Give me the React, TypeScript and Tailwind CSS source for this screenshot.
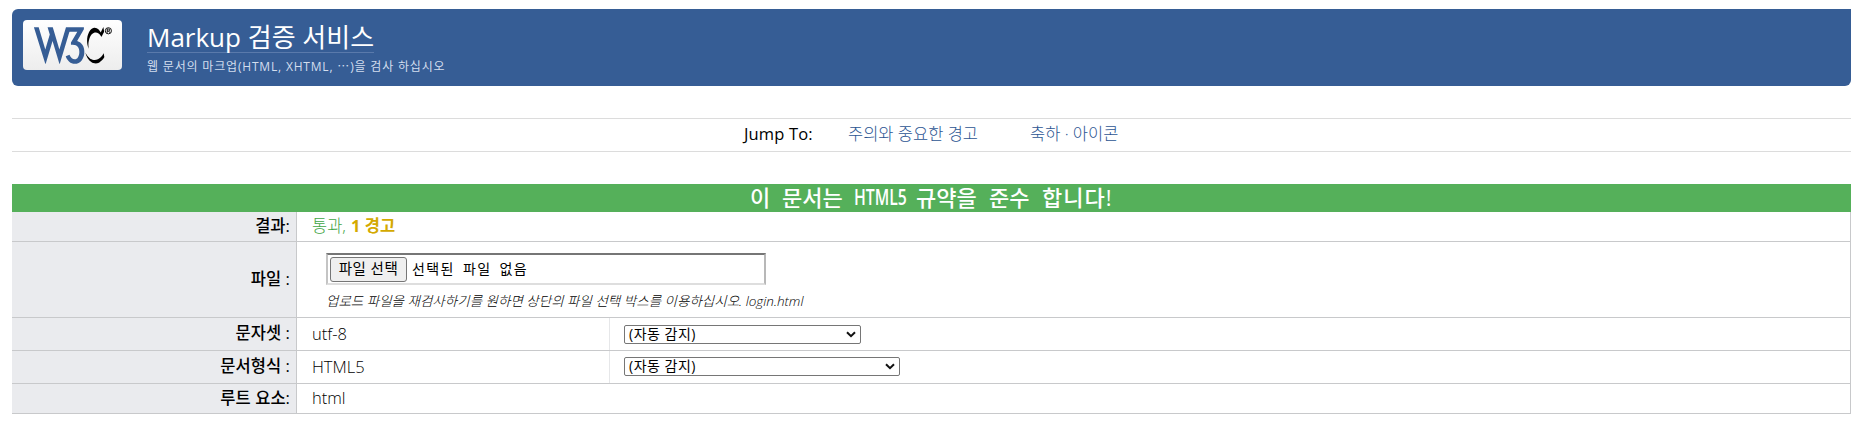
import type { ReactNode } from "react";

function W3CLogo() {
  return (
    <div className="flex h-[50px] w-[99px] shrink-0 items-start rounded bg-gradient-to-b from-white to-[#ededed] pl-[9px] pt-[6px]">
      <svg className="h-[40px] w-[82px]" viewBox="0 0 71.5 35.1" preserveAspectRatio="none" aria-label="W3C">
        <path
          fill="#365d95"
          d="M18.117 1.006l5.759 19.58 5.759-19.58h4.17 11.444v1.946l-5.879 10.128c2.065.663 3.627 1.868 4.686 3.615 1.059 1.748 1.589 3.799 1.589 6.155 0 2.914-.775 5.363-2.324 7.348s-3.555 2.978-6.017 2.978c-1.854 0-3.469-.589-4.845-1.767-1.377-1.178-2.396-2.773-3.058-4.786l3.256-1.35c.477 1.218 1.106 2.178 1.887 2.879.781.702 1.701 1.052 2.76 1.052 1.112 0 2.052-.622 2.82-1.866.768-1.245 1.152-2.74 1.152-4.489 0-1.933-.411-3.429-1.231-4.488-.954-1.244-2.45-1.867-4.489-1.867h-1.588v-1.906l5.56-9.612h-6.712l-.382.65-8.163 27.548h-.397l-5.958-19.937-5.957 19.937h-.397L1.669 1.006h4.17l5.759 19.58 3.892-13.185-1.906-6.395h4.533z"
        />
        <path
          fill="#000"
          transform="translate(-5.9 0)"
          d="M68.139.926l.676 4.105-2.391 4.576s-.918-1.941-2.444-3.016c-1.285-.905-2.122-1.102-3.431-.832-1.681.347-3.587 2.357-4.419 4.835-.995 2.965-1.005 4.4-1.04 5.718-.056 2.113.277 3.362.277 3.362s-1.452-2.686-1.438-6.62c.009-2.808.451-5.354 1.75-7.867 1.143-2.209 2.842-3.535 4.35-3.691 1.559-.161 2.791.59 3.743 1.403 1 .854 2.01 2.721 2.01 2.721L68.139.926zM68.37 23.931s-1.057 1.889-1.715 2.617c-.659.728-1.837 2.01-3.292 2.651s-2.218.762-3.656.624c-1.437-.138-2.772-.97-3.24-1.317-.468-.347-1.664-1.369-2.34-2.322-.676-.953-1.733-2.859-1.733-2.859s.589 1.91.958 2.721c.212.467.864 1.894 1.789 3.136.863 1.159 2.539 3.154 5.086 3.604 2.547.451 4.297-.693 4.73-.97s1.346-1.042 1.924-1.66c.603-.645 1.174-1.468 1.49-1.962.231-.36.607-1.092.607-1.092l-.608-3.171z"
        />
        <ellipse cx="66.6" cy="4.2" rx="2.7" ry="2.7" fill="none" stroke="#000" strokeWidth="0.8" />
        <path d="M65.6 5.9V2.7h1.2c1.4 0 1.4 1.7 0 1.7h-1.2M66.8 4.4l1 1.5" fill="none" stroke="#000" strokeWidth="0.8" />
      </svg>
    </div>
  );
}

function Row({ height, label, children }: { height: string; label: ReactNode; children: ReactNode }) {
  return (
    <div className={`flex border-b border-[#c8c9cb] ${height}`}>
      <div className="flex w-[285px] shrink-0 items-center justify-end border-r border-[#c8c9cb] bg-[#eaebee] pb-px pr-[6px] font-medium tracking-[0.05px] text-black">
        {label}
      </div>
      {children}
    </div>
  );
}

function Select({ width }: { width: string }) {
  return (
    <div className={`flex h-[19px] items-center justify-between rounded-[2px] border border-[#767676] bg-white pl-[4px] pr-[4px] text-[14px] font-normal leading-none tracking-[0.5px] text-black ${width}`}>
      <span className="-mt-px">(자동 감지)</span>
      <svg className="h-[7px] w-[10px]" viewBox="0 0 10 7">
        <path d="M1 1.2l4 4 4-4" fill="none" stroke="#111" strokeWidth="2" />
      </svg>
    </div>
  );
}

export default function App() {
  return (
    <div className="h-[429px] w-[1861px] overflow-hidden bg-white pl-[12px] pr-[10px] pt-[9px] font-['Open_Sans','Noto_Sans_CJK_KR',sans-serif] text-[16.5px] font-light leading-none text-black whitespace-nowrap">
      <header className="flex h-[77px] rounded-l-[6px] rounded-br-[6px] bg-[#365d95] pl-[11px] pt-[11px] text-white">
        <W3CLogo />
        <div className="ml-[25px] flex flex-col items-start">
          <h1 className="flex h-[33px] w-[227px] items-center border-b border-[#5a7aab] pt-px text-[26px] font-normal leading-none">
            Markup 검증 서비스
          </h1>
          <p className="mt-[6px] text-[12px] font-normal leading-[14px] tracking-[0.82px] text-[#d3deee]">
            웹 문서의 마크업(HTML, XHTML, <span className="font-['Noto_Sans_CJK_KR']" lang="ko">⋯</span>)을 검사 하십시오
          </p>
        </div>
      </header>

      <nav className="mt-[32px] flex h-[34px] items-center border-y border-[#dcdcdc] pb-px pl-[732px] text-[16.5px] text-[#2c5592]">
        <span className="w-[104px] font-medium tracking-[0.15px] text-black">Jump To:</span>
        <span className="w-[182px]">주의와 중요한 경고</span>
        <span>축하 · 아이콘</span>
      </nav>

      <h2 className="mt-[32px] flex h-[28px] items-center bg-[#55b05a] pb-[3px] pl-[738px] text-[22px] font-medium leading-none text-white">
        <span className="w-[32px]">이</span>
        <span className="w-[72px]">문서는</span>
        <span className="w-[62px]">
          <span className="inline-block origin-left scale-x-[0.75] text-[21px] font-semibold">HTML5</span>
        </span>
        <span className="w-[73px]">규약을</span>
        <span className="w-[53px]">준수</span>
        <span className="tracking-[1px]">합니다!</span>
      </h2>

      <div className="border-r border-[#c8c9cb]">
        <Row height="h-[30px]" label="결과:">
          <div className="flex items-center pb-px pl-[15px] text-[#3fa545]">
            <span className="w-[39px]">통과,</span>
            <span className="font-bold text-[#d4a900]">1 경고</span>
          </div>
        </Row>
        <Row height="h-[76px]" label="파일 :">
          <div className="flex flex-col pl-[29px] pt-[11px]">
            <div className="flex h-[32px] w-[440px] items-center border-2 border-b-[#dedede] border-l-[#c4c4c4] border-r-[#b8b8b8] border-t-[#767676] pl-[2px] text-[14px] font-normal">
              <span className="flex h-[25px] w-[77px] items-center justify-center rounded-[3px] border border-[#767676] bg-[#efefef] text-[14.5px] tracking-[0.5px] text-black">파일 선택</span>
              <span className="ml-[5px] tracking-[1.4px] [word-spacing:3px]">선택된 파일 없음</span>
            </div>
            <p className="mt-[8px] text-[13.5px] italic leading-[16px]">
              업로드 파일을 재검사하기를 원하면 상단의 파일 선택 박스를 이용하십시오. login.html
            </p>
          </div>
        </Row>
        <Row height="h-[33px]" label="문자셋 :">
          <div className="flex w-[313px] items-center border-r border-[#e6e7e9] pl-[15px]">utf-8</div>
          <div className="flex items-center pl-[14px]">
            <Select width="w-[237px]" />
          </div>
        </Row>
        <Row height="h-[33px]" label="문서형식 :">
          <div className="flex w-[313px] items-center border-r border-[#e6e7e9] pl-[15px]">HTML5</div>
          <div className="flex items-center pb-px pl-[14px]">
            <Select width="w-[276px]" />
          </div>
        </Row>
        <Row height="h-[30px]" label="루트 요소:">
          <div className="flex items-center pb-px pl-[15px]">html</div>
        </Row>
      </div>
    </div>
  );
}
